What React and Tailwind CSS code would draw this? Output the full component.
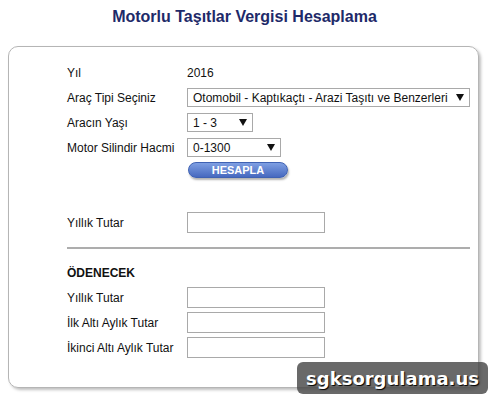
import React from 'react';

const Arrow = () => (
  <svg width="8" height="7" viewBox="0 0 8 7" className="shrink-0">
    <polygon points="0,0 8,0 4,7" fill="#111" />
  </svg>
);

const FakeSelect = ({ value, width }) => (
  <div className={`flex h-[19px] items-center justify-between border border-[#a9a9a9] bg-white pl-[5px] pr-[5px] ${width}`}>
    <span className="whitespace-nowrap">{value}</span>
    <Arrow />
  </div>
);

const Row = ({ label, children, bold }) => (
  <div className="flex h-[25px] items-center">
    <div className={`w-[120px] shrink-0 ${bold ? 'font-bold' : ''}`}>{label}</div>
    {children}
  </div>
);

const TextBox = () => <div className="h-[21px] w-[138px] border border-[#a9a9a9] bg-white" />;

const App = () => {
  return (
    <div className="relative h-[395px] w-[489px] overflow-hidden bg-white font-['Liberation_Sans',Arial,sans-serif] text-[12px] text-[#111]">
      {/* Title */}
      <h1 className="pt-[8px] text-center text-[16px] font-bold leading-[18px] text-[#1e2a69]">
        Motorlu Taşıtlar Vergisi Hesaplama
      </h1>

      {/* Form card */}
      <div className="ml-[8px] mr-[10px] mt-[20px] rounded-[10px] border border-[#b5b5b5] pb-[27px] pl-[58px] pr-[8px] pt-[13px] shadow-[2px_2px_3px_rgba(0,0,0,0.25)]">
        <Row label="Yıl">
          <span>2016</span>
        </Row>
        <Row label="Araç Tipi Seçiniz">
          <FakeSelect value="Otomobil - Kaptıkaçtı - Arazi Taşıtı ve Benzerleri" width="w-[283px]" />
        </Row>
        <Row label="Aracın Yaşı">
          <FakeSelect value="1 - 3" width="w-[66px]" />
        </Row>
        <Row label="Motor Silindir Hacmi">
          <FakeSelect value="0-1300" width="w-[94px]" />
        </Row>

        <div className="ml-[121px] mt-[2px] flex h-[16px] w-[100px] items-center justify-center rounded-full border border-[#3f62b3] bg-gradient-to-b from-[#7f9fe2] to-[#4769bf] text-[11px] font-bold leading-none text-white shadow-[1px_2px_2px_rgba(0,0,0,0.3)]">
          HESAPLA
        </div>

        <div className="mt-[32px]">
          <Row label="Yıllık Tutar">
            <TextBox />
          </Row>
        </div>

        <div className="mt-[12px] h-[2px] w-[403px] bg-[#adadad]" />

        <div className="mt-[11px]">
          <Row label="ÖDENECEK" bold />
          <Row label="Yıllık Tutar">
            <TextBox />
          </Row>
          <Row label="İlk Altı Aylık Tutar">
            <TextBox />
          </Row>
          <Row label="İkinci Altı Aylık Tutar">
            <TextBox />
          </Row>
        </div>
      </div>

      {/* Watermark */}
      <div className="absolute bottom-[1px] right-[1px] flex h-[32px] w-[191px] items-center justify-center rounded-[6px] bg-[#444444]/80 font-['DejaVu_Sans',sans-serif] text-[18px] font-bold text-white [text-shadow:1px_1px_1px_#000]">
        sgksorgulama.us
      </div>
    </div>
  );
};

export default App;
